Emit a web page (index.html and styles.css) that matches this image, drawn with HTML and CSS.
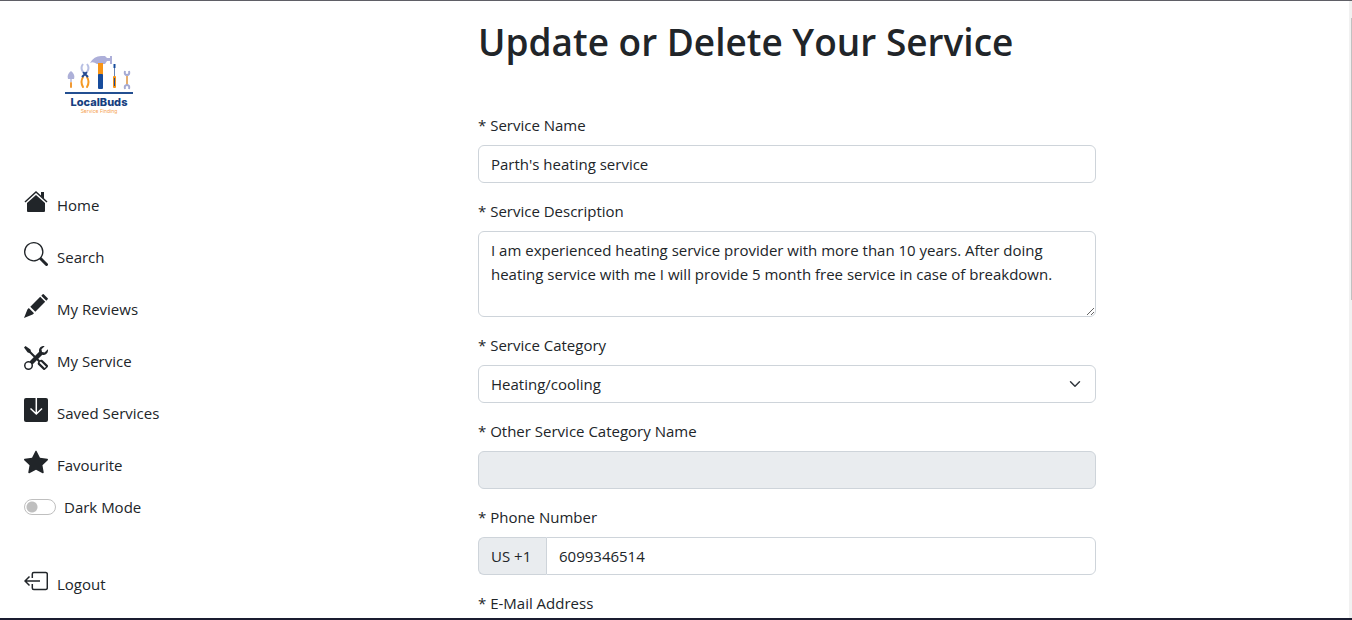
FILE: index.html
```html
<!DOCTYPE html>
<html lang="en">
<head>
<meta charset="utf-8">
<meta name="viewport" content="width=device-width, initial-scale=1">
<title>LocalBuds - Update or Delete Your Service</title>
<link rel="stylesheet" href="styles.css">
</head>
<body>
<div class="shell">
  <nav class="sidebar" aria-label="Main">
    <a class="brand" href="#">
      <svg class="brand-art" viewBox="0 0 68 41" aria-hidden="true">
        <path fill="#adb0d8" d="M6 17c3 2 4 5 3 8H3c-1-3 0-6 3-8z"/>
        <path stroke="#8f94c4" stroke-width="1" d="M6 25v3"/>
        <rect x="5" y="28" width="2" height="6" rx="1" fill="#f09a35"/>
        <path fill="none" stroke="#f59a24" stroke-width="2" stroke-linecap="round" d="M18 23q-3 5 0 10M22 23q3 5 0 10"/>
        <path fill="none" stroke="#244a91" stroke-width="2" d="M17 23l5-5M23 23l-5-5"/>
        <path fill="none" stroke="#b7bfe3" stroke-width="2" d="M18 18q-3-4 0-8M22 18q3-4 0-8"/>
        <path fill="#adafd9" d="M25 9q4-7 11-7h4l2 2h3V2h2v8h-2V7h-3l-2 3h-8q-4-3-7-1z"/>
        <rect x="33" y="9" width="5" height="12" fill="#f79416"/>
        <rect x="33" y="20" width="5" height="15" rx="1" fill="#174c9c"/>
        <path stroke="#6483b5" stroke-width="1" d="M49.500 11v11"/>
        <path stroke="#174c9c" stroke-width="2" d="M49.500 10v4"/>
        <rect x="48" y="22" width="3" height="12" rx="1" fill="#f79416"/>
        <path stroke="#174c9c" stroke-width="1" d="M49.500 24v8"/>
        <path stroke="#e6ad6c" stroke-width="2" d="M62 22v9"/>
        <path fill="none" stroke="#a5aad3" stroke-width="2" d="M60 17q-1 4 2 4t2-4M60 35q-1-4 2-4t2 4"/>
        <path stroke="#234f91" stroke-width="2" d="M0 39h68"/>
      </svg>
      <span class="brand-name">LocalBuds</span>
      <span class="brand-tag">Service Finding</span>
    </a>
    <ul class="menu">
      <li><a class="menu-link" href="#">
        <svg class="icon" viewBox="0 0 24 24" aria-hidden="true"><path fill="currentColor" d="M12 5l9 8v8q0 1-1 1H4q-1 0-1-1v-8zM17 2h3v7l-3-3z"/><path fill="none" stroke="currentColor" stroke-width="1.500" d="M1 12L12 2l11 10"/></svg>
        <span class="menu-text">Home</span></a></li>
      <li><a class="menu-link" href="#">
        <svg class="icon" viewBox="0 0 16 16" aria-hidden="true"><path fill="currentColor" d="M11.742 10.344a6.500 6.500 0 1 0-1.397 1.398c.03.04.062.078.098.115l3.850 3.850a1 1 0 0 0 1.415-1.414l-3.850-3.850a1 1 0 0 0-.116-.1zM12.100 6.500a5.600 5.600 0 1 1-11.200 0 5.600 5.600 0 0 1 11.200 0z"/></svg>
        <span class="menu-text">Search</span></a></li>
      <li><a class="menu-link" href="#">
        <svg class="icon" viewBox="0 0 24 24" aria-hidden="true"><path fill="currentColor" d="M17.300 1.700L18.700.3q.5-.5 1 0l4 4q.5.5 0 1l-1.400 1.400zM16.200 2.800l5 5L11.300 17.700l-5-5zM4.800 14l5.200 5.200-1.400 1.400L0 24l3.400-8.600z"/></svg>
        <span class="menu-text">My Reviews</span></a></li>
      <li><a class="menu-link" href="#">
        <svg class="icon" viewBox="0 0 16 16" aria-hidden="true"><path fill="currentColor" fill-rule="evenodd" d="M1 0 0 1l2.200 3.081a1 1 0 0 0 .815.419h.07a1 1 0 0 1 .708.293l2.675 2.675-2.617 2.654A3.003 3.003 0 0 0 0 13a3 3 0 1 0 5.878-.851l2.654-2.617.968.968-.305.914a1 1 0 0 0 .242 1.023l3.270 3.270a.997.997 0 0 0 1.414 0l1.586-1.586a.997.997 0 0 0 0-1.414l-3.270-3.270a1 1 0 0 0-1.023-.242L10.500 9.500l-.96-.96 2.680-2.643A3.005 3.005 0 0 0 16 3c0-.269-.035-.53-.102-.777l-2.140 2.141L12 4l-.364-1.757L13.777.102a3 3 0 0 0-3.675 3.680L7.462 6.460 4.793 3.793a1 1 0 0 1-.293-.707v-.071a1 1 0 0 0-.419-.814zM10.300 11.200l.9-.9 3.500 3.500-.9.900zM3 11a2 2 0 1 0 0 4 2 2 0 0 0 0-4z"/></svg>
        <span class="menu-text">My Service</span></a></li>
      <li><a class="menu-link" href="#">
        <svg class="icon" viewBox="0 0 24 24" aria-hidden="true"><rect width="24" height="24" rx="2" fill="currentColor"/><path fill="none" stroke="#fff" stroke-width="1.500" d="M12.300 0v16M6.500 10.500l5.800 5.500 5.700-5.500"/></svg>
        <span class="menu-text">Saved Services</span></a></li>
      <li><a class="menu-link" href="#">
        <svg class="icon" viewBox="0 0 16 16" aria-hidden="true"><path fill="currentColor" d="M3.612 15.443c-.386.198-.824-.149-.746-.592l.83-4.730L.173 6.765c-.329-.314-.158-.888.283-.95l4.898-.696L7.538.792c.197-.39.73-.39.927 0l2.184 4.327 4.898.696c.441.062.612.636.282.95l-3.522 3.356.83 4.730c.078.443-.36.79-.746.592L8 13.187z"/></svg>
        <span class="menu-text">Favourite</span></a></li>
    </ul>
    <div class="dark-mode">
      <input class="switch" type="checkbox" role="switch" id="dark">
      <label for="dark">Dark Mode</label>
    </div>
    <a class="menu-link" href="#">
      <svg class="icon" viewBox="0 0 24 24" aria-hidden="true"><path fill="none" stroke="currentColor" stroke-width="1.500" d="M8.300 9V5q0-1.500 1.500-1.500h12q1.500 0 1.500 1.500v14q0 1.500-1.500 1.500h-12q-1.500 0-1.500-1.500v-4M16 12H1M5.500 7.500L1 12l4.500 4.500"/></svg>
      <span class="menu-text">Logout</span></a>
  </nav>
  <main class="content">
    <form class="service-form">
      <h1 class="title">Update or Delete Your Service</h1>
      <div class="field">
        <label for="name">* Service Name</label>
        <input class="control" id="name" type="text" value="Parth's heating service">
      </div>
      <div class="field">
        <label for="description">* Service Description</label>
        <textarea class="control" id="description" rows="3">I am experienced heating service provider with more than 10 years. After doing heating service with me I will provide 5 month free service in case of breakdown.</textarea>
      </div>
      <div class="field">
        <label for="category">* Service Category</label>
        <select class="control select" id="category"><option>Heating/cooling</option></select>
      </div>
      <div class="field">
        <label for="other">* Other Service Category Name</label>
        <input class="control" id="other" type="text" disabled>
      </div>
      <div class="field">
        <label for="phone">* Phone Number</label>
        <div class="group">
          <span class="prefix">US +1</span>
          <input class="control" id="phone" type="tel" value="6099346514">
        </div>
      </div>
      <div class="field">
        <label for="email">* E-Mail Address</label>
        <input class="control" id="email" type="email">
      </div>
    </form>
  </main>
  <div class="track" aria-hidden="true"><div class="thumb"></div></div>
</div>
</body>
</html>
```
FILE: styles.css
```css
* {
  box-sizing: border-box;
}

body {
  margin: 0;
  color: #212529;
  background: #fff;
  font: 15px/24px "Open Sans", "Noto Sans", sans-serif;
}

.shell {
  position: relative;
  display: flex;
  height: 100vh;
  overflow: hidden;
  border-top: 1px solid #5f5f66;
  border-bottom: 2px solid #1a1c30;
}

.sidebar {
  flex: 0 0 222px;
  padding: 53px 24px 0;
}

.brand {
  display: flex;
  flex-direction: column;
  align-items: center;
  width: 68px;
  margin-left: 41px;
  text-decoration: none;
  white-space: nowrap;
}

.brand-art {
  width: 68px;
  height: 41px;
}

.brand-name {
  color: #173f80;
  font: 800 11px/14px Inter, sans-serif;
}

.brand-tag {
  color: #f5a04c;
  font: 5px/5px Inter, sans-serif;
}

.menu {
  display: grid;
  gap: 25px;
  margin: 76px 0 18px;
  padding: 0;
  list-style: none;
}

.menu-link {
  display: flex;
  gap: 9px;
  color: inherit;
  text-decoration: none;
}

.icon {
  flex: none;
  width: 24px;
  height: 24px;
}

.menu-text {
  padding-top: 3px;
}

.dark-mode {
  display: flex;
  align-items: center;
  gap: 8px;
  margin-bottom: 50px;
}

.switch {
  appearance: none;
  width: 32px;
  height: 16px;
  margin: 0;
  border: 1px solid #bfbfbf;
  border-radius: 8px;
  background: radial-gradient(circle at 7px 7px, #bfbfbf 5px, #fff 6px);
}

.content {
  flex: 1;
  padding: 17px 24px 0;
}

.service-form {
  max-width: 618px;
  margin: 0 auto;
}

.title {
  margin: 0 0 47px;
  font-size: 37px;
  font-weight: 600;
  line-height: 48px;
}

.field {
  display: grid;
  gap: 8px;
  margin-bottom: 16px;
}

.control {
  display: block;
  width: 100%;
  min-width: 0;
  height: 38px;
  margin: 0;
  padding: 6px 12px;
  color: inherit;
  font: inherit;
  background: #fff;
  border: 1px solid #ced4da;
  border-radius: 6px;
}

textarea.control {
  height: 86px;
  resize: vertical;
}

.control:disabled {
  background: #e9ecef;
}

.select {
  appearance: none;
  background: #fff url("data:image/svg+xml,%3Csvg xmlns='http://www.w3.org/2000/svg' viewBox='0 0 16 16'%3E%3Cpath fill='none' stroke='%23343a40' stroke-linecap='round' stroke-linejoin='round' stroke-width='2' d='m2 5 6 6 6-6'/%3E%3C/svg%3E") no-repeat right 12px center / 16px 12px;
}

.group {
  display: flex;
}

.prefix {
  min-width: 68px;
  padding: 6px 12px;
  white-space: nowrap;
  background: #e9ecef;
  border: 1px solid #ced4da;
  border-right: 0;
  border-radius: 6px 0 0 6px;
}

.group .control {
  flex: 1;
  border-radius: 0 6px 6px 0;
}

.track {
  position: absolute;
  top: 0;
  right: 0;
  bottom: 0;
  width: 3px;
  padding: 17px 0 0 2px;
  background: #f1f1f1;
}

.thumb {
  height: 47%;
  background: #c1c1c1;
}
```
